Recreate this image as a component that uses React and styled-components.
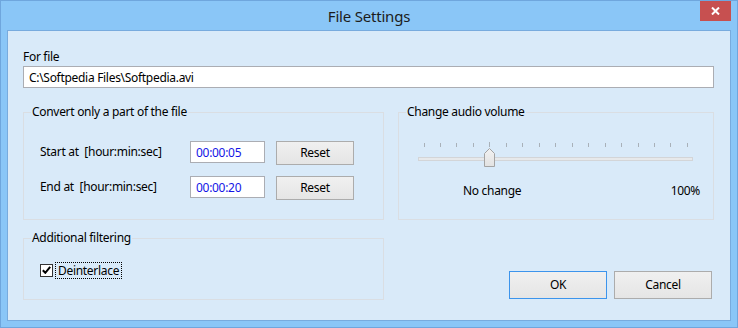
import React from 'react';
import styled, { createGlobalStyle } from 'styled-components';

const GlobalStyle = createGlobalStyle`
  html, body {
    margin: 0;
    padding: 0;
  }
  body {
    width: 738px;
    height: 328px;
    overflow: hidden;
    background: #8ac6f7;
    font-family: "Noto Sans", "Open Sans", sans-serif;
    font-size: 12px;
    letter-spacing: -0.3px;
    color: #000;
  }
  * {
    box-sizing: border-box;
  }
`;

const Window = styled.div`
  position: relative;
  width: 738px;
  height: 328px;
  display: flex;
  flex-direction: column;
  background: #8ac6f7;
  border: 1px solid #6fa6dd;
`;

const TitleBar = styled.div`
  height: 29px;
  display: flex;
  align-items: center;
  justify-content: center;
  font-size: 15px;
  letter-spacing: -0.2px;
  color: #1c1c1c;
`;

const CloseButton = styled.div`
  position: absolute;
  top: 0;
  right: 6px;
  width: 31px;
  height: 20px;
  background: #c75050;
  display: flex;
  align-items: center;
  justify-content: center;
`;

const Client = styled.div`
  flex: 1;
  margin: 0 6px 6px;
  background: #d9eaf9;
  border: 1px solid #78abde;
  padding: 18px 16px 0 15px;
  display: flex;
  flex-direction: column;
`;

const Label = styled.div`
  line-height: 16px;
  white-space: nowrap;
`;

const TextBox = styled.input`
  display: block;
  width: ${p => p.$width || '100%'};
  height: 22px;
  margin-top: ${p => p.$top || '0'};
  padding: 0 0 0 5px;
  border: 1px solid #abadb3;
  background: #fff;
  font-family: inherit;
  font-size: 12px;
  letter-spacing: -0.3px;
  color: ${p => p.$color || '#000'};
  outline: none;
`;

const Columns = styled.div`
  margin-top: 24px;
  display: grid;
  grid-template-columns: 361px 316px;
  column-gap: 14px;
`;

const Column = styled.div`
  display: flex;
  flex-direction: column;
  gap: ${p => p.$gap || '0'};
`;

const Group = styled.div`
  position: relative;
  height: ${p => p.$height};
  border: 1px solid #dadee3;
  padding: ${p => p.$padding};
`;

const Caption = styled.span`
  position: absolute;
  top: -9px;
  left: 7px;
  padding: 0 1px;
  line-height: 16px;
  background: #d9eaf9;
  white-space: nowrap;
`;

const TimeGrid = styled.div`
  display: grid;
  grid-template-columns: 139px 75px 78px;
  grid-auto-rows: 24px;
  column-gap: 11px;
  row-gap: 11px;
  align-items: start;
`;

const RowLabel = styled(Label)`
  align-self: center;
  margin-top: -2px;
`;

const Button = styled.div`
  width: ${p => p.$width};
  height: ${p => p.$height};
  display: flex;
  align-items: center;
  justify-content: center;
  background: linear-gradient(#f0f0f0, #e5e5e5);
  border: 1px solid ${p => (p.$default ? '#3c94ec' : '#acacac')};
  font-size: 12px;
  line-height: 16px;
`;

const CheckRow = styled.div`
  display: flex;
  align-items: center;
  height: 18px;
`;

const CheckBox = styled.span`
  width: 13px;
  height: 13px;
  border: 1px solid #333;
  background: #fff;
  display: flex;
  align-items: center;
  justify-content: center;
`;

const FocusLabel = styled.span`
  margin-left: 2px;
  padding: 0 2px;
  height: 17px;
  line-height: 15px;
  border: 1px dotted #000;
`;

const Slider = styled.div`
  position: relative;
  width: 275px;
  height: 26px;
  margin-left: 19px;
`;

const Ticks = styled.svg`
  display: block;
`;

const Track = styled.div`
  margin-top: 9px;
  height: 4px;
  background: #e7e9eb;
  border: 1px solid #d3d5d8;
`;

const Thumb = styled.svg`
  position: absolute;
  left: ${p => p.$left}px;
  top: 6px;
`;

const ValueRow = styled.div`
  display: flex;
  justify-content: space-between;
  margin-top: 15px;
  padding: 0 13px 0 64px;
  line-height: 16px;
`;

const ButtonRow = styled.div`
  margin-top: 51px;
  padding-right: 2px;
  display: flex;
  justify-content: flex-end;
  gap: 7px;
`;

const tickCount = 17;
const tickStep = (268.7 - 5.3) / (tickCount - 1);

function VolumeSlider({ position }) {
  const ticks = Array.from({ length: tickCount }, (_, i) => 5.5 + i * tickStep);
  return (
    <Slider>
      <Ticks width="275" height="6" viewBox="0 0 275 6">
        {ticks.map((x, i) => (
          <line
            key={i}
            x1={Math.round(x) + 0.5}
            x2={Math.round(x) + 0.5}
            y1={i === position ? 0 : 1}
            y2="5"
            stroke="#a9b1b9"
            strokeWidth="1"
          />
        ))}
      </Ticks>
      <Track />
      <Thumb $left={Math.round(ticks[position]) - 5} width="11" height="19" viewBox="0 0 11 19">
        <defs>
          <linearGradient id="thumbFill" x1="0" y1="0" x2="0" y2="1">
            <stop offset="0" stopColor="#f2f2f2" />
            <stop offset="1" stopColor="#e2e2e2" />
          </linearGradient>
        </defs>
        <path d="M0.5 18.5 V5.5 L5.5 0.5 L10.5 5.5 V18.5 Z" fill="url(#thumbFill)" stroke="#a3a3a3" />
      </Thumb>
    </Slider>
  );
}

export default function App() {
  return (
    <>
      <GlobalStyle />
      <Window>
        <TitleBar>File Settings</TitleBar>
        <CloseButton>
          <svg width="9" height="8" viewBox="0 0 9 8">
            <path d="M1 0.5 L8 7.5 M8 0.5 L1 7.5" stroke="#fff" strokeWidth="2" />
          </svg>
        </CloseButton>
        <Client>
          <Label>For file</Label>
          <TextBox $top="1px" readOnly defaultValue="C:\Softpedia Files\Softpedia.avi" />
          <Columns>
            <Column $gap="18px">
              <Group $height="108px" $padding="28px 0 0 16px">
                <Caption>Convert only a part of the file</Caption>
                <TimeGrid>
                  <RowLabel>Start at&nbsp; [hour:min:sec]</RowLabel>
                  <TextBox $width="75px" $color="#1414e6" readOnly defaultValue="00:00:05" />
                  <Button $width="78px" $height="24px">Reset</Button>
                  <RowLabel>End at&nbsp; [hour:min:sec]</RowLabel>
                  <TextBox $width="75px" $color="#1414e6" readOnly defaultValue="00:00:20" />
                  <Button $width="78px" $height="24px">Reset</Button>
                </TimeGrid>
              </Group>
              <Group $height="62px" $padding="22px 0 0 16px">
                <Caption>Additional filtering</Caption>
                <CheckRow>
                  <CheckBox>
                    <svg width="9" height="8" viewBox="0 0 9 8">
                      <path d="M0.8 4.2 L3.3 6.8 L8.2 0.8" fill="none" stroke="#000" strokeWidth="2" />
                    </svg>
                  </CheckBox>
                  <FocusLabel>Deinterlace</FocusLabel>
                </CheckRow>
              </Group>
            </Column>
            <Column>
              <Group $height="108px" $padding="29px 0 0 0">
                <Caption>Change audio volume</Caption>
                <VolumeSlider position={4} />
                <ValueRow>
                  <span>No change</span>
                  <span>100%</span>
                </ValueRow>
              </Group>
              <ButtonRow>
                <Button $width="98px" $height="28px" $default>OK</Button>
                <Button $width="98px" $height="28px">Cancel</Button>
              </ButtonRow>
            </Column>
          </Columns>
        </Client>
      </Window>
    </>
  );
}
